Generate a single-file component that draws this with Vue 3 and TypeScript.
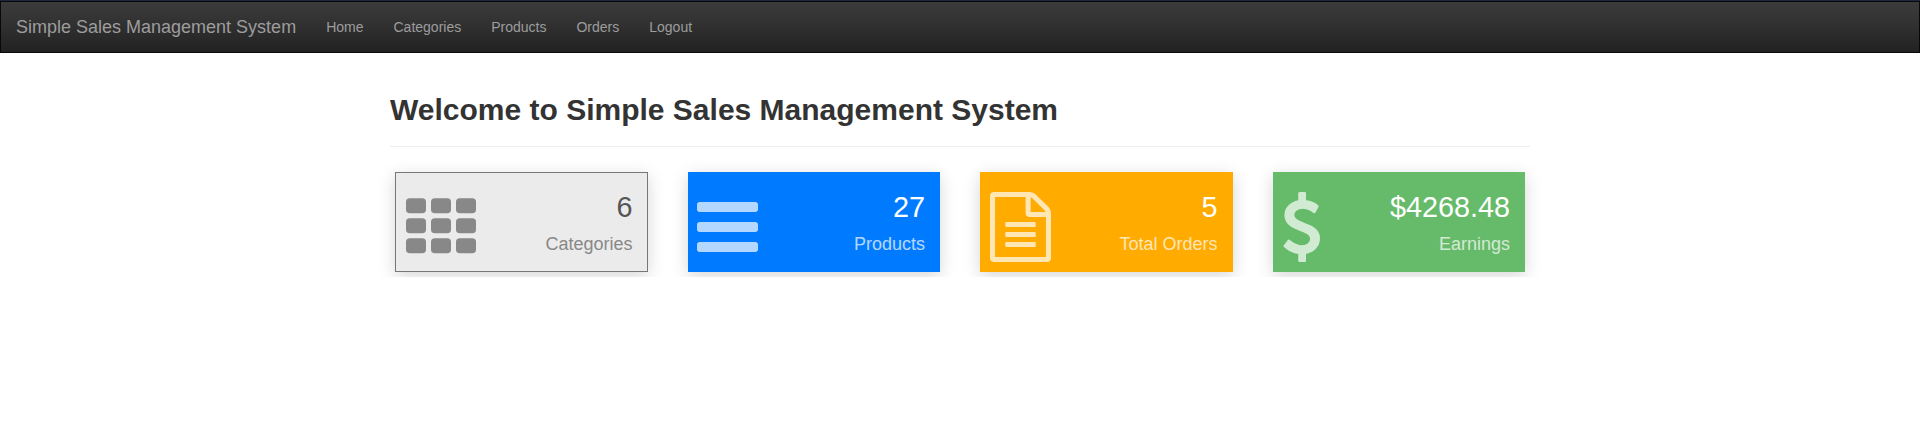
<script setup lang="ts">
interface Stat {
  value: string
  label: string
  tone: string
  icon: 'grid' | 'bars' | 'file' | 'dollar'
}

const navItems: string[] = ['Home', 'Categories', 'Products', 'Orders', 'Logout']

const stats: Stat[] = [
  { value: '6', label: 'Categories', tone: 'light', icon: 'grid' },
  { value: '27', label: 'Products', tone: 'blue', icon: 'bars' },
  { value: '5', label: 'Total Orders', tone: 'amber', icon: 'file' },
  { value: '$4268.48', label: 'Earnings', tone: 'green', icon: 'dollar' }
]

const gridCells = [0, 25, 50].flatMap((x) => [6.25, 26.25, 46.25].map((y) => ({ x, y })))
</script>

<template>
  <div class="page">
    <nav class="navbar">
      <a class="brand" href="#">Simple Sales Management System</a>
      <ul class="nav">
        <li v-for="item in navItems" :key="item"><a href="#">{{ item }}</a></li>
      </ul>
    </nav>

    <main class="container">
      <header class="page-header">
        <h1>Welcome to Simple Sales Management System</h1>
      </header>

      <section class="stats">
        <div v-for="stat in stats" :key="stat.label" class="stat-col">
          <article class="card" :class="`card--${stat.tone}`">
            <div class="icon">
              <svg v-if="stat.icon === 'grid'" width="70" height="70" viewBox="0 0 70 70" fill="currentColor">
                <rect v-for="c in gridCells" :key="`${c.x}-${c.y}`" :x="c.x" :y="c.y" width="20" height="15" rx="3.75" />
              </svg>
              <svg v-else-if="stat.icon === 'bars'" class="bars" width="61" height="70" viewBox="0 0 1536 1792" preserveAspectRatio="none" fill="currentColor">
                <path d="M1536 1344v128q0 26-19 45t-45 19h-1408q-26 0-45-19t-19-45v-128q0-26 19-45t45-19h1408q26 0 45 19t19 45zM1536 832v128q0 26-19 45t-45 19h-1408q-26 0-45-19t-19-45v-128q0-26 19-45t45-19h1408q26 0 45 19t19 45zM1536 320v128q0 26-19 45t-45 19h-1408q-26 0-45-19t-19-45v-128q0-26 19-45t45-19h1408q26 0 45 19t19 45z" />
              </svg>
              <svg v-else-if="stat.icon === 'file'" width="61" height="70" viewBox="0 0 1536 1792" preserveAspectRatio="none" fill="currentColor">
                <path d="M1468 380q28 28 48 76t20 88v1152q0 40-28 68t-68 28h-1344q-40 0-68-28t-28-68v-1600q0-40 28-68t68-28h896q40 0 88 20t76 48zM1024 136v376h376q-10-29-22-41l-313-313q-12-12-41-22zM1408 1664v-1024h-416q-40 0-68-28t-28-68v-416h-768v1536h1280zM384 800q0-14 9-23t23-9h704q14 0 23 9t9 23v64q0 14-9 23t-23 9h-704q-14 0-23-9t-9-23v-64zM1120 1024q14 0 23 9t9 23v64q0 14-9 23t-23 9h-704q-14 0-23-9t-9-23v-64q0-14 9-23t23-9h704zM1120 1280q14 0 23 9t9 23v64q0 14-9 23t-23 9h-704q-14 0-23-9t-9-23v-64q0-14 9-23t23-9h704z" />
              </svg>
              <svg v-else width="41" height="70" viewBox="415 0 1050 1792" fill="currentColor">
                <path d="M1362 1185q0 153-99.5 263.5t-258.5 136.5v175q0 14-9 23t-23 9h-135q-13 0-22.5-9.5t-9.5-22.5v-175q-66-9-127.5-31t-101.5-44.5-74-48-46.5-37.5-17.5-18q-17-21-2-41l103-135q7-10 23-12 15-2 24 9l2 2q113 99 243 125 37 8 74 8 81 0 142.5-43t61.5-122q0-28-15-53t-33.5-42-58.5-37.5-66-32-80-32.5q-39-16-61.5-25t-61.5-26.5-62.5-31-56.5-35.5-53.5-42.5-43.5-49-35.5-58-21-66.5-8.5-78q0-138 98-242t255-134v-180q0-13 9.5-22.5t22.5-9.5h135q14 0 23 9t9 23v176q57 6 110.5 23t87 33.5 63.5 37.5 39 29 15 14q17 18 5 38l-81 146q-8 15-23 16-14 3-27-7-3-3-14.5-12t-39-26.5-58.5-32-74.5-26-85.5-11.5q-95 0-155 43t-60 111q0 26 8.5 48t29.5 41.5 39.5 33 56 31 60.5 27 70 27.5q53 20 81 31.5t76 35 75.5 42.5 62 50 53 63.5 31.5 76.5 13 94z" />
              </svg>
            </div>
            <div class="text">
              <div class="value">{{ stat.value }}</div>
              <div class="label">{{ stat.label }}</div>
            </div>
          </article>
        </div>
      </section>
    </main>
  </div>
</template>

<style>
html,
body {
  margin: 0;
  background: #fff;
}
</style>

<style scoped>
.page {
  border-top: 1px solid #1d2740;
  font-family: "Liberation Sans", Arial, sans-serif;
  font-size: 14px;
  line-height: 20px;
  color: #333;
}

.navbar {
  display: flex;
  box-sizing: border-box;
  height: 52px;
  background: linear-gradient(to bottom, #3c3c3c 0%, #222 100%);
  border: 1px solid #080808;
}

.brand {
  padding: 15px;
  font-size: 18px;
  color: #9d9d9d;
  text-decoration: none;
}

.nav {
  display: flex;
  margin: 0;
  padding: 0;
  list-style: none;
}

.nav a {
  display: block;
  padding: 15px;
  color: #9d9d9d;
  text-decoration: none;
}

.container {
  box-sizing: border-box;
  width: 1170px;
  margin: 0 auto;
  padding: 0 15px;
}

.page-header {
  margin: 40px 0 20px;
  padding-bottom: 10px;
  border-bottom: 1px solid #eee;
}

h1 {
  margin: 0 0 10px;
  font-size: 30px;
  font-weight: 700;
  line-height: 33px;
}

.stats {
  display: grid;
  grid-template-columns: repeat(4, 1fr);
  margin: 0 -15px;
}

.stat-col {
  padding: 5px 20px;
}

.card {
  display: flex;
  justify-content: space-between;
  box-sizing: border-box;
  height: 100px;
  padding: 20px 15px 0 10px;
  color: #fff;
  box-shadow: 0 4px 16px rgba(0, 0, 0, 0.16);
}

.card--light {
  padding: 19px 14px 0 10px;
  color: #555;
  background: #ebebeb;
  border: 1px solid #777;
}

.card--blue {
  background: #007bff;
}

.card--amber {
  background: #ffab00;
}

.card--green {
  background: #66bb6a;
}

.icon {
  height: 70px;
  opacity: 0.7;
}

.card--light .icon,
.card--light .label {
  color: #888;
  opacity: 1;
}

.icon svg {
  display: block;
}

.icon .bars {
  margin-left: -0.5px;
}

.text {
  text-align: right;
}

.value {
  font-size: 28.8px;
  line-height: 31px;
  margin-bottom: 11px;
}

.label {
  font-size: 18px;
  line-height: 20px;
  opacity: 0.7;
}
</style>
